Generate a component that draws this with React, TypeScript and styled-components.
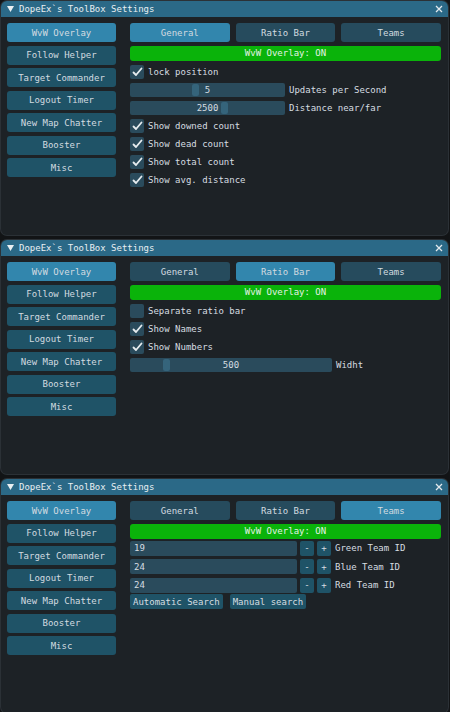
import styled, { createGlobalStyle } from "styled-components";

const GlobalStyle = createGlobalStyle`
  html, body {
    margin: 0;
    padding: 0;
    background: #121416;
  }
  body {
    font-family: "DejaVu Sans Mono", "Liberation Mono", monospace;
    font-size: 9px;
    color: #d6dde1;
  }
`;

const Page = styled.div`
  width: 450px;
  height: 712px;
  overflow: hidden;
  box-sizing: border-box;
  padding-top: 1px;
  display: flex;
  flex-direction: column;
  gap: 5px;
`;

const Window = styled.section`
  flex: none;
  margin-left: 1px;
  width: 447px;
  height: 234px;
  background: #1d2226;
  border-radius: 6px;
  box-shadow: 0 0 0 1px #2b3136;
  overflow: hidden;
  display: flex;
  flex-direction: column;
`;

const TitleBar = styled.header`
  height: 16px;
  flex: none;
  background: #2b6987;
  display: flex;
  align-items: center;
  padding: 0 5px 0 6px;
  gap: 5px;
  color: #e9eff2;
`;

const Title = styled.span`
  flex: 1;
  white-space: pre;
`;

const Body = styled.div`
  display: flex;
  gap: 14px;
  padding: 6px 7px 0 6px;
`;

const SideMenu = styled.nav`
  width: 109px;
  flex: none;
  display: flex;
  flex-direction: column;
  gap: 3.5px;
`;

const MenuButton = styled.div<{ $active?: boolean }>`
  height: 19px;
  border-radius: 3px;
  background: ${(p) => (p.$active ? "#3286ad" : "#1f5367")};
  display: flex;
  align-items: center;
  justify-content: center;
  color: #d3dbe0;
`;

const Content = styled.div`
  flex: 1;
  display: flex;
  flex-direction: column;
`;

const Tabs = styled.div`
  display: grid;
  grid-template-columns: repeat(3, 1fr);
  gap: 6px;
`;

const Tab = styled.div<{ $active?: boolean }>`
  height: 19px;
  border-radius: 3px;
  background: ${(p) => (p.$active ? "#3286ad" : "#264b5d")};
  display: flex;
  align-items: center;
  justify-content: center;
  color: #d3dbe0;
`;

const Status = styled.div`
  margin-top: 3.5px;
  height: 15px;
  border-radius: 3px;
  background: #0ab30a;
  display: flex;
  align-items: center;
  justify-content: center;
  color: #e4f2e4;
`;

const Rows = styled.div<{ $gap?: number }>`
  margin-top: ${(p) => (p.$gap === undefined ? 4 : 2)}px;
  display: flex;
  flex-direction: column;
  gap: ${(p) => p.$gap ?? 4}px;
`;

const Row = styled.div<{ $h?: number }>`
  height: ${(p) => p.$h ?? 14}px;
  display: flex;
  align-items: center;
  gap: 4px;
  white-space: pre;
`;

const Box = styled.div`
  width: 14px;
  height: 14px;
  flex: none;
  border-radius: 2px;
  background: #2a4b5c;
  display: flex;
  align-items: center;
  justify-content: center;
`;

const SliderTrack = styled.div<{ $w: number }>`
  position: relative;
  width: ${(p) => p.$w}px;
  height: 14px;
  flex: none;
  border-radius: 2px;
  background: #2a4b5c;
  display: flex;
  align-items: center;
  justify-content: center;
`;

const Grab = styled.div`
  position: absolute;
  top: 1px;
  bottom: 1px;
  width: 7px;
  border-radius: 2px;
  background: #35647b;
`;

const SliderValue = styled.span`
  position: relative;
`;

const Input = styled.div`
  width: 167px;
  height: 15px;
  flex: none;
  border-radius: 2px;
  background: #2a4b5c;
  display: flex;
  align-items: center;
  padding-left: 4px;
  box-sizing: border-box;
`;

const StepButton = styled.div`
  width: 14px;
  height: 15px;
  flex: none;
  border-radius: 2px;
  background: #1f5367;
  display: flex;
  align-items: center;
  justify-content: center;
`;

const Steppers = styled.div`
  display: flex;
  gap: 3px;
  margin-left: -1px;
`;

const SmallButton = styled.div`
  height: 15px;
  padding: 0 3px;
  border-radius: 2px;
  background: #1f5367;
  display: flex;
  align-items: center;
`;

const ButtonRow = styled.div`
  display: flex;
  gap: 7px;
  margin-top: -2px;
`;

const menu = [
  "WvW Overlay",
  "Follow Helper",
  "Target Commander",
  "Logout Timer",
  "New Map Chatter",
  "Booster",
  "Misc",
];

const tabs = ["General", "Ratio Bar", "Teams"];

function Check() {
  return (
    <svg width="11" height="10" viewBox="0 0 11 10">
      <polyline
        points="1.5,5.5 4,8 9.5,1.5"
        fill="none"
        stroke="#e6ecef"
        strokeWidth="1.8"
        strokeLinecap="round"
        strokeLinejoin="round"
      />
    </svg>
  );
}

function CheckRow({ label, checked }: { label: string; checked: boolean }) {
  return (
    <Row>
      <Box>{checked && <Check />}</Box>
      {label}
    </Row>
  );
}

function Slider({
  width,
  value,
  pos,
  label,
}: {
  width: number;
  value: string;
  pos: number;
  label: string;
}) {
  return (
    <Row>
      <SliderTrack $w={width}>
        <Grab style={{ left: pos }} />
        <SliderValue>{value}</SliderValue>
      </SliderTrack>
      {label}
    </Row>
  );
}

function TeamRow({ value, label }: { value: string; label: string }) {
  return (
    <Row $h={15}>
      <Input>{value}</Input>
      <Steppers>
        <StepButton>-</StepButton>
        <StepButton>+</StepButton>
      </Steppers>
      {label}
    </Row>
  );
}

function GeneralTab() {
  return (
    <Rows>
      <CheckRow label="lock position" checked />
      <Slider width={155} value="5" pos={62} label="Updates per Second" />
      <Slider width={155} value="2500" pos={91} label="Distance near/far" />
      <CheckRow label="Show downed count" checked />
      <CheckRow label="Show dead count" checked />
      <CheckRow label="Show total count" checked />
      <CheckRow label="Show avg. distance" checked />
    </Rows>
  );
}

function RatioTab() {
  return (
    <Rows>
      <CheckRow label="Separate ratio bar" checked={false} />
      <CheckRow label="Show Names" checked />
      <CheckRow label="Show Numbers" checked />
      <Slider width={202} value="500" pos={33} label="Widht" />
    </Rows>
  );
}

function TeamsTab() {
  return (
    <Rows $gap={3.5}>
      <TeamRow value="19" label="Green Team ID" />
      <TeamRow value="24" label="Blue Team ID" />
      <TeamRow value="24" label="Red Team ID" />
      <ButtonRow>
        <SmallButton>Automatic Search</SmallButton>
        <SmallButton>Manual search</SmallButton>
      </ButtonRow>
    </Rows>
  );
}

function SettingsWindow({ tab }: { tab: number }) {
  return (
    <Window>
      <TitleBar>
        <svg width="7" height="6" viewBox="0 0 7 6">
          <polygon points="0,0 7,0 3.5,6" fill="#e9eff2" />
        </svg>
        <Title>DopeEx`s ToolBox Settings</Title>
        <svg width="8" height="8" viewBox="0 0 8 8">
          <path d="M1 1 L7 7 M7 1 L1 7" stroke="#e2e9ed" strokeWidth="1.3" />
        </svg>
      </TitleBar>
      <Body>
        <SideMenu>
          {menu.map((m, i) => (
            <MenuButton key={m} $active={i === 0}>
              {m}
            </MenuButton>
          ))}
        </SideMenu>
        <Content>
          <Tabs>
            {tabs.map((t, i) => (
              <Tab key={t} $active={i === tab}>
                {t}
              </Tab>
            ))}
          </Tabs>
          <Status>WvW Overlay: ON</Status>
          {tab === 0 && <GeneralTab />}
          {tab === 1 && <RatioTab />}
          {tab === 2 && <TeamsTab />}
        </Content>
      </Body>
    </Window>
  );
}

export default function App() {
  return (
    <>
      <GlobalStyle />
      <Page>
        <SettingsWindow tab={0} />
        <SettingsWindow tab={1} />
        <SettingsWindow tab={2} />
      </Page>
    </>
  );
}
